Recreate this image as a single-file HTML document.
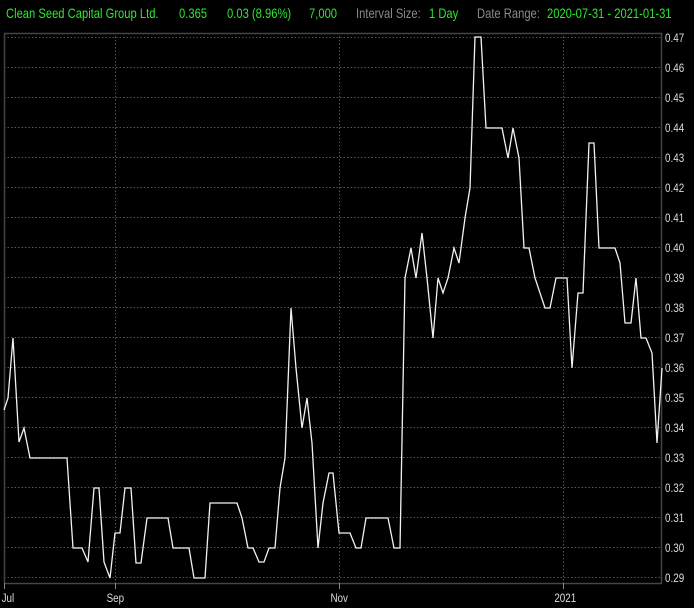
<!DOCTYPE html>
<html><head><style>
body{margin:0;background:#000;width:694px;height:608px;overflow:hidden;font-family:"Liberation Sans",sans-serif}
.h{position:absolute;top:5px;font-size:14px;white-space:nowrap;transform:scaleX(0.8);transform-origin:left top;font-weight:normal}
.g{color:#2ee62e}.y{color:#8a8a8a}
</style></head><body>
<div class="h g" style="left:6px">Clean Seed Capital Group Ltd.</div>
<div class="h g" style="left:179px">0.365</div>
<div class="h g" style="left:227px">0.03 (8.96%)</div>
<div class="h g" style="left:309px">7,000</div>
<div class="h y" style="left:356px">Interval Size:</div>
<div class="h g" style="left:429px">1 Day</div>
<div class="h y" style="left:477px">Date Range:</div>
<div class="h g" style="left:547px">2020-07-31 - 2021-01-31</div>
<svg width="694" height="608" style="position:absolute;left:0;top:0" font-family="Liberation Sans,sans-serif" font-size="12" fill="#ddd">
<g stroke="#555" stroke-dasharray="1.5,2" stroke-width="1">
<line x1="4" x2="661" y1="37.5" y2="37.5"/><line x1="4" x2="661" y1="67.5" y2="67.5"/><line x1="4" x2="661" y1="97.5" y2="97.5"/><line x1="4" x2="661" y1="127.5" y2="127.5"/><line x1="4" x2="661" y1="157.5" y2="157.5"/><line x1="4" x2="661" y1="187.5" y2="187.5"/><line x1="4" x2="661" y1="217.5" y2="217.5"/><line x1="4" x2="661" y1="247.5" y2="247.5"/><line x1="4" x2="661" y1="277.5" y2="277.5"/><line x1="4" x2="661" y1="307.5" y2="307.5"/><line x1="4" x2="661" y1="337.5" y2="337.5"/><line x1="4" x2="661" y1="367.5" y2="367.5"/><line x1="4" x2="661" y1="397.5" y2="397.5"/><line x1="4" x2="661" y1="427.5" y2="427.5"/><line x1="4" x2="661" y1="457.5" y2="457.5"/><line x1="4" x2="661" y1="487.5" y2="487.5"/><line x1="4" x2="661" y1="517.5" y2="517.5"/><line x1="4" x2="661" y1="547.5" y2="547.5"/><line x1="4" x2="661" y1="577.5" y2="577.5"/>
<line x1="115.5" x2="115.5" y1="33" y2="583"/><line x1="339.5" x2="339.5" y1="33" y2="583"/><line x1="563.5" x2="563.5" y1="33" y2="583"/>
</g>
<path d="M4.5 583.5V33.5H661.5V583.5H4.5" fill="none" stroke="#444" stroke-width="1.5"/>
<g stroke="#888"><line x1="4.5" x2="4.5" y1="583" y2="589"/><line x1="115.5" x2="115.5" y1="583" y2="589"/><line x1="339.5" x2="339.5" y1="583" y2="589"/><line x1="563.5" x2="563.5" y1="583" y2="589"/></g>
<polyline fill="none" stroke="#f2f2f2" stroke-width="1.3" points="4,410 8,398 13,338 19,442 24,428 30,458 67,458 73,548 82,548 88,562 94,488 99,488 104,562 110,578 115,533 120,533 125,488 131,488 136,563 141,563 147,518 168,518 173,548 189,548 194,578 205,578 210,503 237,503 242,518 248,548 253,548 259,562 264,562 269,548 275,548 280,488 285,458 291,308 296,368 302,428 307,398 312,443 318,548 323,503 329,473 333,473 339,533 350,533 356,548 361,548 366,518 388,518 394,548 400,548 405,278 411,248 416,278 422,233 427,278 433,338 438,278 443,293 448,278 454,248 459,263 465,218 470,188 475,37 481,37 486,128 502,128 508,158 513,128 519,158 524,248 529,248 535,278 545,308 550,308 556,278 567,278 572,368 578,293 583,293 589,143 594,143 599,248 615,248 620,263 625,323 631,323 636,278 641,338 646,338 652,353 657,443 662,368"/>
<g transform="scale(0.82,1)">
<text x="811" y="42">0.47</text><text x="811" y="72">0.46</text><text x="811" y="102">0.45</text><text x="811" y="132">0.44</text><text x="811" y="162">0.43</text><text x="811" y="192">0.42</text><text x="811" y="222">0.41</text><text x="811" y="252">0.40</text><text x="811" y="282">0.39</text><text x="811" y="312">0.38</text><text x="811" y="342">0.37</text><text x="811" y="372">0.36</text><text x="811" y="402">0.35</text><text x="811" y="432">0.34</text><text x="811" y="462">0.33</text><text x="811" y="492">0.32</text><text x="811" y="522">0.31</text><text x="811" y="552">0.30</text><text x="811" y="582">0.29</text>
<text x="2" y="602">Jul</text><text x="130" y="602">Sep</text><text x="403" y="602">Nov</text><text x="676" y="602">2021</text>
</g>
</svg>
</body></html>
